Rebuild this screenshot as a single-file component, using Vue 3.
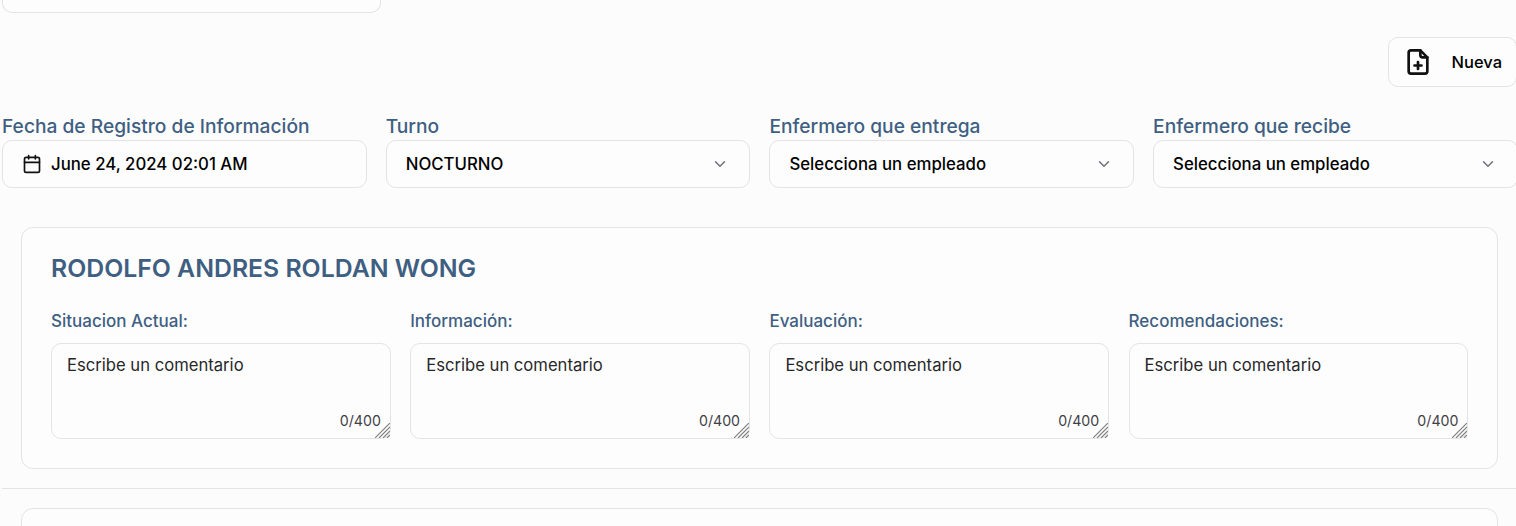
<script setup>
const selects = [
  { label: 'Turno', value: 'NOCTURNO' },
  { label: 'Enfermero que entrega', value: 'Selecciona un empleado' },
  { label: 'Enfermero que recibe', value: 'Selecciona un empleado' },
]
const fields = ['Situacion Actual:', 'Información:', 'Evaluación:', 'Recomendaciones:']
</script>

<template>
  <div class="page">
    <div class="top-box"></div>

    <div class="actions">
      <button class="new-btn" type="button">
        <svg class="file-icon" viewBox="0 0 24 24" fill="none" stroke="#111" stroke-width="2.3" stroke-linecap="round" stroke-linejoin="round">
          <path d="M14 2H6a2 2 0 0 0-2 2v16a2 2 0 0 0 2 2h12a2 2 0 0 0 2-2V8z" />
          <path d="M14 2v4a2 2 0 0 0 2 2h4" />
          <path d="M12 12v6M9 15h6" />
        </svg>
        <span>Nueva</span>
      </button>
    </div>

    <div class="filters">
      <div class="filter">
        <label class="filter-label">Fecha de Registro de Información</label>
        <div class="control date">
          <svg class="cal-icon" viewBox="0 0 24 24" fill="none" stroke="#111" stroke-width="2" stroke-linecap="round" stroke-linejoin="round">
            <rect x="3" y="4" width="18" height="18" rx="2" />
            <path d="M8 2v4M16 2v4M3 10h18" />
          </svg>
          <span>June 24, 2024 02:01 AM</span>
        </div>
      </div>
      <div v-for="s in selects" :key="s.label" class="filter">
        <label class="filter-label">{{ s.label }}</label>
        <div class="control select">
          <span>{{ s.value }}</span>
          <svg class="chev" viewBox="0 0 24 24" fill="none" stroke="#71717a" stroke-width="2" stroke-linecap="round" stroke-linejoin="round">
            <path d="m6 9 6 6 6-6" />
          </svg>
        </div>
      </div>
    </div>

    <section class="card">
      <h2 class="name">RODOLFO ANDRES ROLDAN WONG</h2>
      <div class="fields">
        <div v-for="f in fields" :key="f" class="field">
          <label class="field-label">{{ f }}</label>
          <div class="area-wrap">
            <textarea class="area" placeholder="Escribe un comentario"></textarea>
            <span class="count">0/400</span>
            <svg class="grip" viewBox="0 0 15 15" stroke="#808080" stroke-width="1.2">
              <path d="M15 0 0 15M15 4 4 15M15 8 8 15M15 12 12 15" />
            </svg>
          </div>
        </div>
      </div>
    </section>

    <hr class="sep" />

    <section class="card next"></section>
  </div>
</template>

<style>
html, body { margin: 0; background: #fcfcfc; overflow: hidden; }
</style>

<style scoped>
.page {
  width: 1516px;
  height: 526px;
  margin-left: 2px;
  overflow: hidden;
  font-family: Inter, "Liberation Sans", sans-serif;
  color: #000;
}
.top-box {
  width: 379px;
  height: 13px;
  box-sizing: border-box;
  background: #fdfdfd;
  border: 1px solid #e4e4e7;
  border-top: 0;
  border-radius: 0 0 10px 10px;
}
.actions {
  display: flex;
  justify-content: flex-end;
  margin-top: 24px;
  padding-right: 1px;
}
.new-btn {
  display: flex;
  align-items: center;
  gap: 19.5px;
  width: 129px;
  height: 50px;
  padding: 0 0 0 15px;
  box-sizing: border-box;
  background: #fdfdfd;
  border: 1px solid #e4e4e7;
  border-radius: 10px;
  font: 500 16.5px Inter, sans-serif;
  color: #000;
}
.file-icon { width: 28px; height: 28px; flex: none; }
.filters {
  display: grid;
  grid-template-columns: repeat(4, 364.5px);
  gap: 19.2px;
  margin-top: 27px;
}
.filter { display: flex; flex-direction: column; }
.filter-label {
  font-size: 19.2px;
  line-height: 24px;
  font-weight: 500;
  color: #3f5f82;
  height: 26px;
}
.control {
  display: flex;
  align-items: center;
  height: 48px;
  box-sizing: border-box;
  background: #fdfdfd;
  border: 1px solid #e4e4e7;
  border-radius: 10px;
  font-size: 16.8px;
  font-weight: 500;
}
.date { padding-left: 18.5px; gap: 9.5px; }
.cal-icon { width: 20px; height: 20px; flex: none; }
.select { justify-content: space-between; padding: 0 20px 0 19px; }
.chev { width: 18px; height: 18px; flex: none; }
.card {
  margin: 39px 20px 0 19px;
  padding: 29px 28px 29px 29px;
  height: 242px;
  box-sizing: border-box;
  background: #fdfdfd;
  border: 1px solid #e4e4e7;
  border-radius: 12px;
}
.name {
  margin: 0;
  font-size: 24.8px;
  line-height: 22px;
  font-weight: 600;
  color: #3f5f82;
}
.fields {
  display: grid;
  grid-template-columns: repeat(4, 339.9px);
  gap: 19.3px;
  margin-top: 30px;
}
.field-label {
  display: block;
  font-size: 17px;
  line-height: 24px;
  font-weight: 500;
  color: #3f5f82;
}
.area-wrap { position: relative; margin-top: 10px; height: 96px; }
.area {
  display: block;
  width: 100%;
  height: 96px;
  box-sizing: border-box;
  padding: 10px 15px;
  background: #fdfdfd;
  border: 1px solid #e4e4e7;
  border-radius: 10px;
  font: 400 16.64px/22px Inter, sans-serif;
  resize: none;
  outline: none;
}
.area::placeholder { color: #27272a; opacity: 1; }
.count {
  position: absolute;
  right: 10px;
  bottom: 9px;
  font-size: 14.2px;
  line-height: 18px;
  color: #3f3f46;
}
.grip {
  position: absolute;
  right: 1px;
  bottom: 1px;
  width: 15px;
  height: 15px;
}
.sep {
  margin: 19px 0 0;
  border: 0;
  border-top: 1px solid #e4e4e7;
}
.next { margin-top: 19px; height: 40px; }
</style>
